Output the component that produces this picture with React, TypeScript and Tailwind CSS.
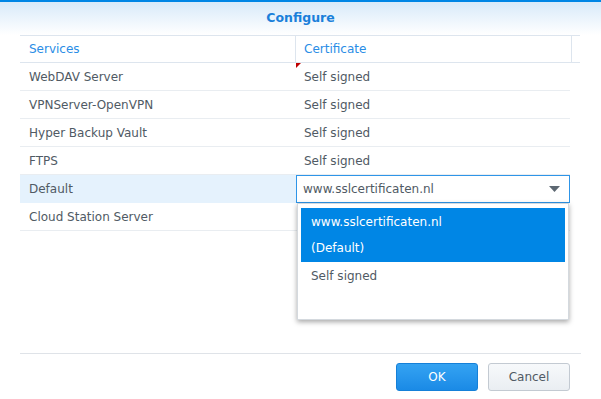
import React from 'react';

const rows = [
  { service: 'WebDAV Server', cert: 'Self signed', dirty: true },
  { service: 'VPNServer-OpenVPN', cert: 'Self signed' },
  { service: 'Hyper Backup Vault', cert: 'Self signed' },
  { service: 'FTPS', cert: 'Self signed' },
  { service: 'Default', cert: '', selected: true },
  { service: 'Cloud Station Server', cert: '' },
];

const SelectBox = () => (
  <div className="relative w-[274px] h-[28px]">
    <div className="flex items-center justify-between h-full border border-[#2e95e8] bg-white pl-[6px] pr-[8px]">
      <span>www.sslcertificaten.nl</span>
      <svg width="11" height="6" viewBox="0 0 11 6" className="mr-[1px]">
        <polygon points="0,0 11,0 5.5,6" fill="#5d6872" />
      </svg>
    </div>
    <div className="absolute left-[1px] top-[28px] w-[272px] h-[117px] bg-white border border-[#d4d9de] shadow-[0_2px_5px_rgba(0,0,0,0.35)] px-[3px] pt-[4px] z-10">
      <div className="bg-[#0086e5] text-white pl-[10px] py-[1px] leading-[26px]">
        <div>www.sslcertificaten.nl</div>
        <div>(Default)</div>
      </div>
      <div className="pl-[10px] leading-[28px]">Self signed</div>
    </div>
  </div>
);

export default function App() {
  return (
    <div className="w-[601px] h-[399px] bg-white flex flex-col text-[12px] text-[#505a64] font-['DejaVu_Sans',sans-serif]">
      <div className="h-[2px] bg-[#0086e5]" />
      <div className="h-[33px] flex items-center justify-center bg-gradient-to-b from-[#d8eaf9] to-white">
        <span className="font-bold text-[12.5px] text-[#1a80da]">Configure</span>
      </div>

      <div className="mx-[20px] w-[560px]">
        <div className="flex h-[28px] border-y border-[#dde5ee] text-[#2a8de6]">
          <div className="w-[276px] pl-[9px] border-r border-[#dde5ee] flex items-center">
            Services
          </div>
          <div className="w-[276px] pl-[8px] border-r border-[#dde5ee] flex items-center">
            Certificate
          </div>
        </div>
        {rows.map((row) => (
          <div
            key={row.service}
            className={`flex w-[550px] h-[28px] border-b ${
              row.selected ? 'bg-[#e5f2fd] border-[#e5f2fd]' : 'border-[#e9edf1]'
            }`}
          >
            <div className="w-[276px] pl-[9px] flex items-center">{row.service}</div>
            <div className="relative w-[274px] flex items-center">
              {row.dirty && (
                <span className="absolute left-0 top-0 w-0 h-0 border-t-[5px] border-r-[5px] border-t-[#c00000] border-r-transparent" />
              )}
              {row.selected ? (
                <SelectBox />
              ) : (
                <span className="pl-[8px]">{row.cert}</span>
              )}
            </div>
          </div>
        ))}
      </div>

      <div className="flex-1" />
      <div className="mx-[20px] border-t border-[#dfe3e8]" />
      <div className="flex justify-end gap-[10px] pr-[31px] pt-[9px] pb-[8px]">
        <button className="w-[82px] h-[28px] rounded-[3px] border border-[#1580d8] bg-gradient-to-b from-[#34a3f2] to-[#1a8ae6] text-white text-[12px]">
          OK
        </button>
        <button className="w-[82px] h-[28px] rounded-[3px] border border-[#c3cad2] bg-gradient-to-b from-[#f7f9fb] to-[#eaeef2] text-[#505a64] text-[12px]">
          Cancel
        </button>
      </div>
    </div>
  );
}
